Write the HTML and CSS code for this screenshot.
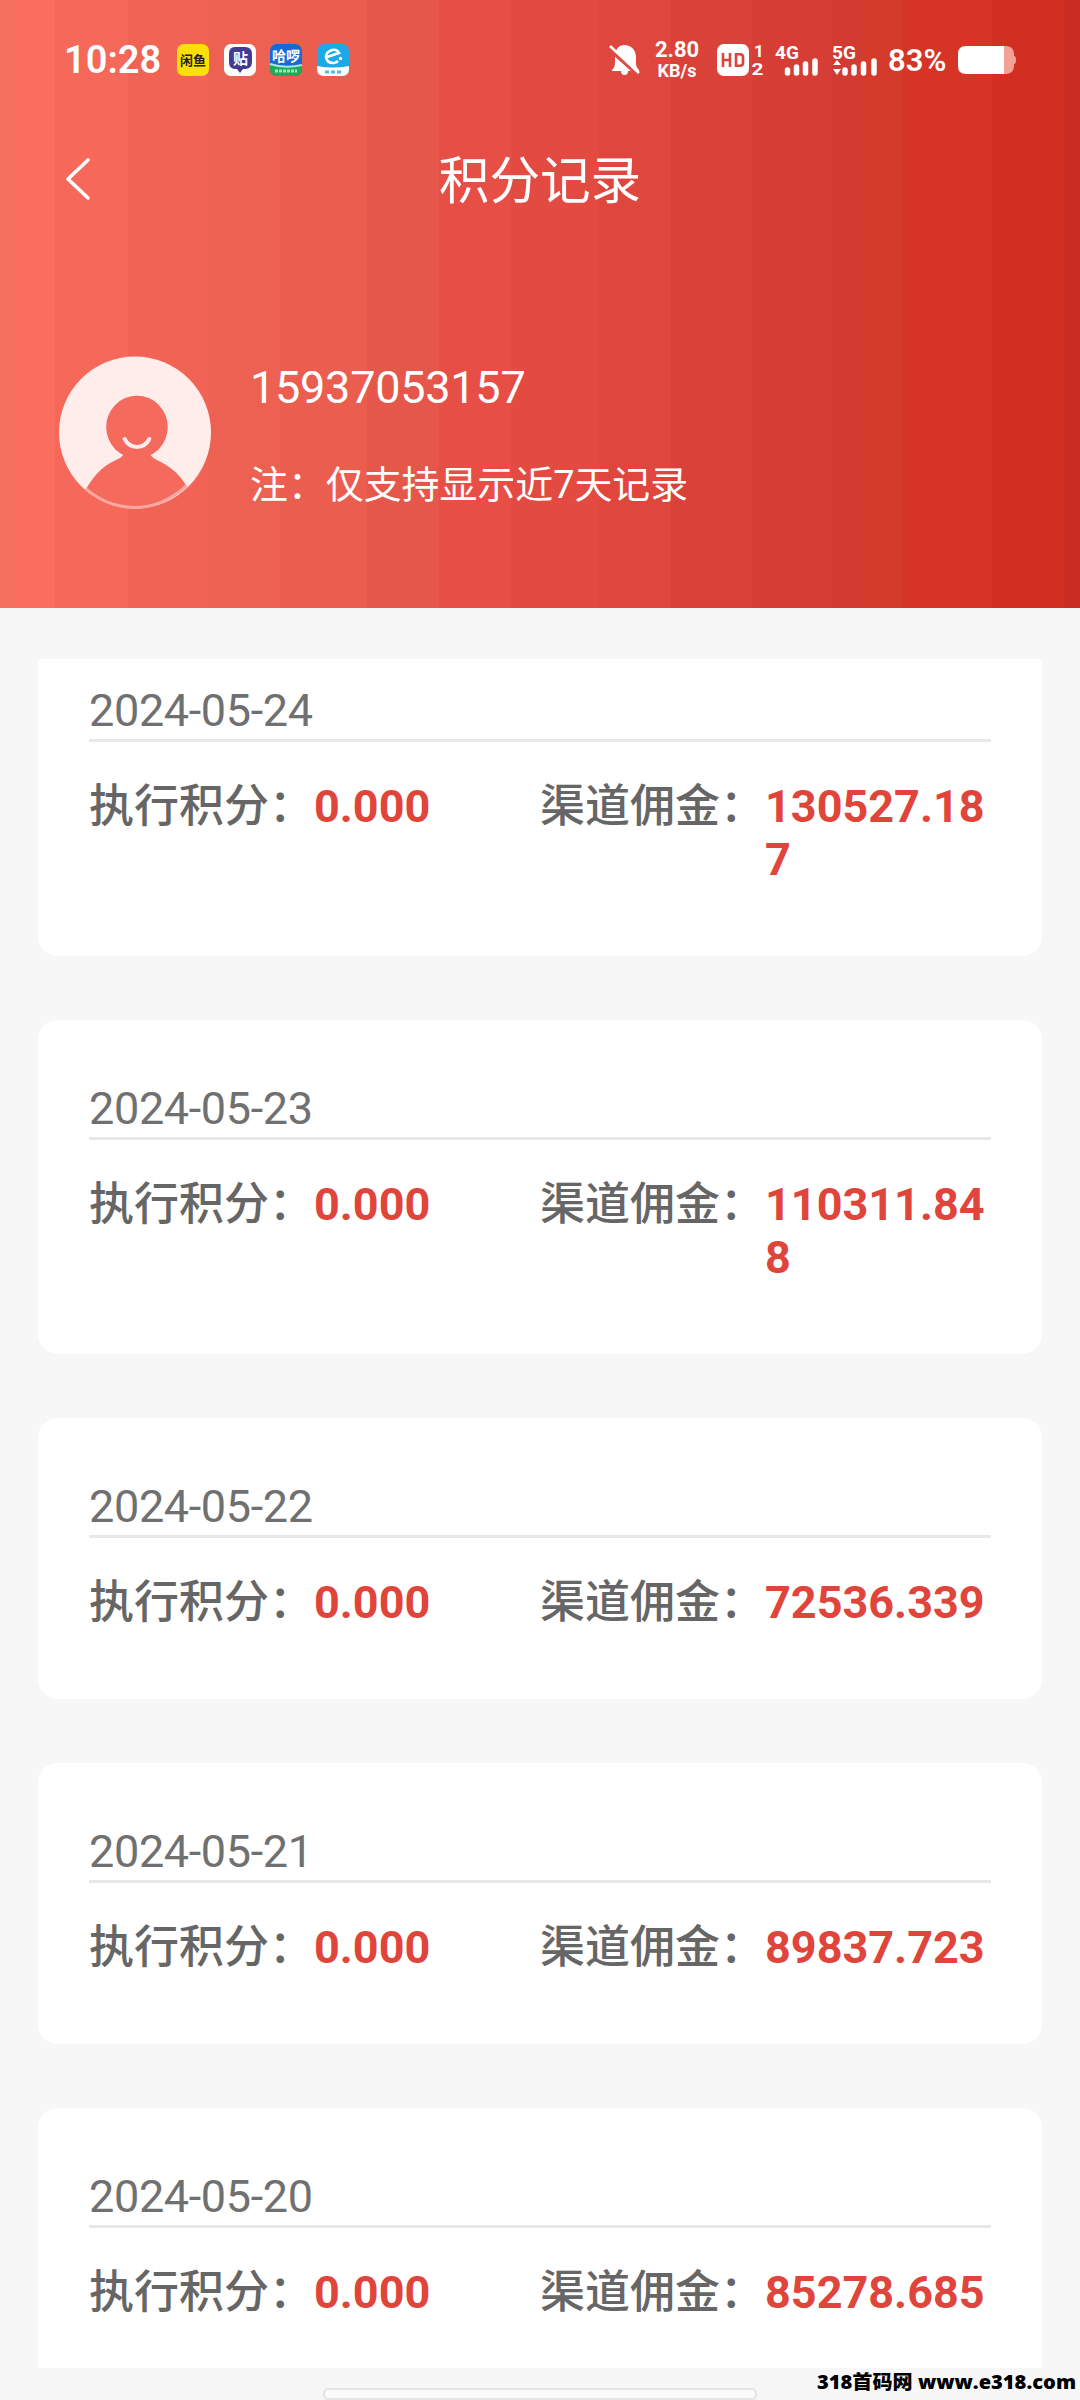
FILE: index.html
```html
<!DOCTYPE html>
<html lang="zh-CN">
<head>
<meta charset="utf-8">
<title>积分记录</title>
<link rel="stylesheet" href="styles.css">
</head>
<body>
<div class="screen">
  <header class="header">
    <div class="status">
      <span class="time">10:28</span>
      <div class="apps">
        <svg width="32" height="32" viewBox="0 0 32 32"><rect width="32" height="32" rx="7" fill="#ffdf0a"/><text x="16" y="21" class="app-text" font-size="13" fill="#222">闲鱼</text></svg>
        <svg width="32" height="32" viewBox="0 0 32 32"><rect width="32" height="32" rx="7" fill="#fff"/><path d="M11 3h10q7 0 7 7v8q0 7-7 7h-2l-3 4-3-4h-2q-6 0-6-7v-8q0-7 6-7z" fill="#453a94"/><text x="16.500" y="20" class="app-text" font-size="15" fill="#fff">贴</text></svg>
        <svg width="32" height="32" viewBox="0 0 32 32"><rect width="32" height="32" rx="7" fill="#1769d8"/><path d="M0 20q14 5 32 1v4q0 7-7 7H7q-7 0-7-7z" fill="#20a957"/><path d="M0 20q15 5 32 1" stroke="#a7e6e5" stroke-width="2" fill="none"/><text x="16" y="17" class="app-text" font-size="14" fill="#fff">哈啰</text><path d="M5 27h22" stroke="#a5e4b7" stroke-width="3" stroke-dasharray="3 1"/></svg>
        <svg width="32" height="32" viewBox="0 0 32 32"><rect width="32" height="32" rx="7" fill="#1ba9e8"/><path d="M0 22q16 3 32 0v3q0 7-7 7H7q-7 0-7-7z" fill="#fff"/><path d="M10 13l12-4q-2-4-7-3-6 2-6 7 1 6 7 6 3 0 5-2" stroke="#fff" stroke-width="2.600" fill="none"/><circle cx="23.500" cy="14.500" r="1.700" fill="#fff"/><path d="M8 28h17" stroke="#55b9e3" stroke-width="3" stroke-dasharray="4 2"/></svg>
      </div>
      <div class="indicators">
        <svg class="bell" width="32" height="34" viewBox="0 0 32 34"><path d="M3 27c2-2 3-4 3-7v-6C6 6 10 2 15.500 2S27 6 27 14v6c0 3 1 5 3 7v1H19q0 4-3.500 4T12 28H3z" fill="#fff"/><path d="M1 6l29 26" stroke="#df4b42" stroke-width="5"/><path d="M1 3l29 27" stroke="#fff" stroke-width="2.500"/></svg>
        <div class="speed"><span class="rate">2.80</span><span class="unit">KB/s</span></div>
        <svg class="hd" width="48" height="34" viewBox="0 0 48 34"><rect x="0" y="1" width="32" height="32" rx="7" fill="#fff"/><path d="M6 10v14M13 10v14M6 17h7M19 11.200h4q3 0 3 3v5.600q0 3-3 3h-4z" stroke="#d9453c" stroke-width="2.600" fill="none"/><text x="37" y="14" class="sim">1</text><text x="34.500" y="32" class="sim" textLength="12" lengthAdjust="spacingAndGlyphs">2</text></svg>
        <svg class="cell" width="46" height="34" viewBox="0 0 46 34"><text x="0" y="16" class="net">4G</text><path d="M12.500 27v3M21.500 24v6M30.500 21v9M40 18v12" stroke="#fff" stroke-width="5.500" stroke-linecap="round"/></svg>
        <svg class="cell cell-5g" width="46" height="34" viewBox="0 0 46 34"><text x="0" y="16" class="net">5G</text><path d="M1 22l4-5 4 5zM1 26h8l-4 6z" fill="#fff"/><path d="M13 27v3M22 24v6M31.500 21v9M42 18v12" stroke="#fff" stroke-width="5.500" stroke-linecap="round"/></svg>
        <span class="percent">83%</span>
        <svg class="battery" width="58" height="30" viewBox="0 0 58 30"><path d="M45 1h3q7 0 8 7v3q2 0 2 4t-2 4v3q-1 7-8 7h-3z" fill="#f3a197"/><path d="M8 1h38v28H8q-8 0-8-8V9q0-8 8-8z" fill="#fff"/></svg>
      </div>
    </div>
    <nav class="nav">
      <svg class="back" width="26" height="44" viewBox="0 0 26 44"><path d="M23 3L3 22l20 19" fill="none" stroke="#fff" stroke-width="3.600" stroke-linecap="round" stroke-linejoin="round"/></svg>
      <h1 class="title">积分记录</h1>
    </nav>
    <section class="profile">
      <svg class="avatar" width="152" height="153" viewBox="0 0 153 153">
        <defs><clipPath id="face"><circle cx="76.500" cy="76.500" r="74.500"/></clipPath></defs>
        <circle cx="76.500" cy="76.500" r="76.500" fill="#ffedeb"/>
        <g clip-path="url(#face)" fill="#f46b5e"><ellipse cx="78.500" cy="71" rx="31" ry="31.500"/><path d="M66 95q0 5-8 9-19 8-31 30v25h102v-27q-9-18-31-28-7-4-7-9z"/></g>
        <path d="M66 83q4 8 12.500 8T91 83" stroke="#ffedeb" stroke-width="4" fill="none" stroke-linecap="round"/>
        <path d="M27 133q22 19 49.500 19t52-22" stroke="#faa79f" stroke-width="3" fill="none"/>
      </svg>
      <div class="info"><div class="phone">15937053157</div><div class="note">注：仅支持显示近7天记录</div></div>
    </section>
  </header>
  <main class="list">
    <article class="card clipped"><div class="date">2024-05-24</div><div class="row"><div class="cell-item"><span class="label">执行积分：</span><span class="value">0.000</span></div><div class="cell-item"><span class="label">渠道佣金：</span><span class="value">130527.187</span></div></div></article>
    <article class="card"><div class="date">2024-05-23</div><div class="row"><div class="cell-item"><span class="label">执行积分：</span><span class="value">0.000</span></div><div class="cell-item"><span class="label">渠道佣金：</span><span class="value">110311.848</span></div></div></article>
    <article class="card"><div class="date">2024-05-22</div><div class="row"><div class="cell-item"><span class="label">执行积分：</span><span class="value">0.000</span></div><div class="cell-item"><span class="label">渠道佣金：</span><span class="value">72536.339</span></div></div></article>
    <article class="card"><div class="date">2024-05-21</div><div class="row"><div class="cell-item"><span class="label">执行积分：</span><span class="value">0.000</span></div><div class="cell-item"><span class="label">渠道佣金：</span><span class="value">89837.723</span></div></div></article>
    <article class="card"><div class="date">2024-05-20</div><div class="row"><div class="cell-item"><span class="label">执行积分：</span><span class="value">0.000</span></div><div class="cell-item"><span class="label">渠道佣金：</span><span class="value">85278.685</span></div></div></article>
  </main>
  <footer class="footer"><div class="home-bar"></div></footer>
  <svg class="watermark" width="262" height="28" viewBox="0 0 262 28"><text x="0" y="20" textLength="259" lengthAdjust="spacingAndGlyphs">318首码网 www.e318.com</text></svg>
</div>
</body>
</html>
```

FILE: styles.css
```css
* { box-sizing: border-box; }
body { margin: 0; font-family: Roboto, "Noto Sans CJK SC", sans-serif; }
svg { overflow: visible; }
.screen { position: relative; width: 1080px; height: 2400px; overflow: hidden; background: #f7f7f7; display: flex; flex-direction: column; }
.header {
  height: 608px; flex: none; color: #fff;
  background: linear-gradient(90deg, #f6705f 15px, #fb6d5f 15px 55px, #f6685a 55px 128px, #f16455 128px 208px, #ed6153 208px 280px, #ea5d4f 280px 367px, #e4574a 367px 439px, #e74f46 439px 511px, #e34b42 511px 599px, #df463d 599px 671px, #da4239 671px 752px, #d63e35 752px 832px, #d13b32 832px 861px, #d43b2a 861px 903px, #d53426 903px 992px, #d02f22 992px 1064px, #c92b20 1064px);
}
.status { height: 120px; padding: 0 64px; display: flex; align-items: center; }
.time { width: 113px; font-size: 38px; font-weight: 600; line-height: 44px; }
.apps { display: flex; gap: 14.500px; }
.app-text { font-family: "Noto Sans CJK SC", sans-serif; font-weight: 700; text-anchor: middle; }
.indicators { display: flex; align-items: center; margin-left: auto; }
.indicators svg { flex: none; }
.speed { width: 44px; margin-left: 14px; display: flex; flex-direction: column; align-items: center; font-weight: 700; }
.rate { font-size: 22px; line-height: 22px; }
.unit { font-size: 18px; line-height: 20px; }
.hd { margin-left: 18px; }
.sim { font: 700 17px Roboto, sans-serif; fill: #fff; }
.cell { margin-left: 10px; }
.cell-5g { margin-left: 11px; }
.net { font: 700 19px Roboto, sans-serif; fill: #fff; }
.percent { width: 60px; margin-left: 10px; padding-top: 2px; font-size: 31px; font-weight: 600; line-height: 36px; }
.battery { margin-left: 10px; }
.nav { height: 120px; display: grid; grid-template-columns: 66px 1fr 66px; align-items: center; padding: 0 0 2px; }
.back { margin-left: 65px; }
.title { margin: 0; padding-top: 6px; text-align: center; font-size: 50.600px; line-height: 60px; font-weight: 400; }
.profile { display: flex; gap: 39px; padding: 116px 0 0 59px; }
.info { padding-top: 5px; }
.phone { font-size: 45px; line-height: 54px; letter-spacing: -0.250px; }
.note { margin-top: 42px; font-size: 37.900px; line-height: 56px; }
.list { height: 1709px; margin-top: 51px; padding: 0 38px; flex: none; overflow: hidden; display: flex; flex-direction: column; gap: 64px; }
.card { flex: none; padding: 65px 51px 71px; background: #fff; border-radius: 20px; }
.clipped { padding-top: 28px; border-radius: 4px 4px 20px 20px; }
.date { height: 55px; padding-top: 1px; border-bottom: 3px solid #e8e8e8; color: #707070; font-size: 45px; line-height: 45px; letter-spacing: -0.350px; }
.row { display: grid; grid-template-columns: 1fr 1fr; padding-top: 37px; }
.cell-item { display: flex; font-size: 45px; line-height: 53px; }
.label { flex: none; width: 225px; padding-top: 1px; height: 53px; color: #666; font-weight: 500; white-space: nowrap; }
.value { flex: 1; min-width: 0; margin: 1px 0 -1px; color: #df453a; font-weight: 700; overflow-wrap: anywhere; }
.footer { flex: 1; padding-top: 20px; }
.home-bar { width: 434px; height: 12px; margin: 0 auto; border: 2px solid #e4e4e4; border-radius: 5px; background: #fafafa; }
.watermark { position: absolute; left: 817px; top: 2369px; }
.watermark text { font: 800 19px "Open Sans", "Noto Sans CJK SC", sans-serif; fill: #000; }
```
